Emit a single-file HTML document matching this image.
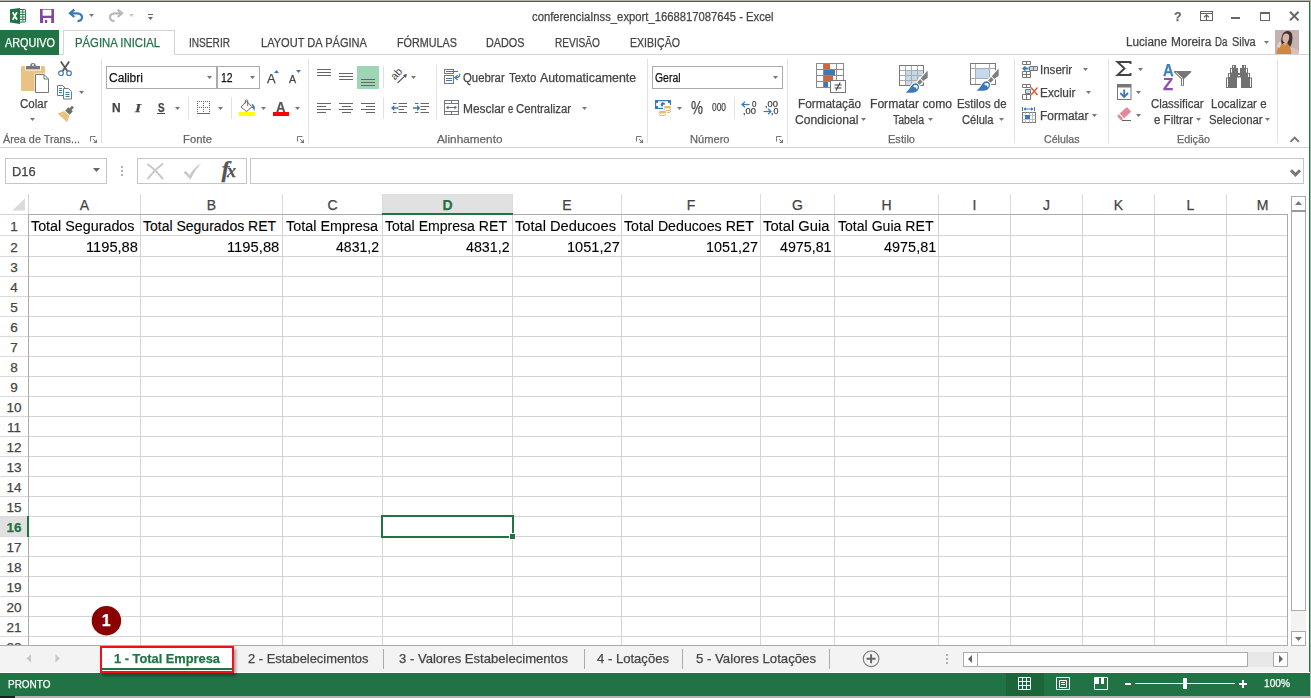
<!DOCTYPE html><html><head><meta charset="utf-8"><title>Excel</title><style>
html,body{margin:0;padding:0;}body{width:1311px;height:698px;position:relative;overflow:hidden;background:#fff;font-family:"Liberation Sans", sans-serif;}
.a{position:absolute;box-sizing:border-box;}svg.a{overflow:visible;}
.t{position:absolute;white-space:pre;line-height:1;transform-origin:0 0;-webkit-text-stroke:0.25px currentColor;}
</style></head><body>
<div class="a" style="left:0px;top:0px;width:1311px;height:1px;background:#217346;"></div>
<div class="a" style="left:1309px;top:0px;width:1px;height:697px;background:#217346;"></div>
<div class="a" style="left:1310px;top:0px;width:1px;height:698px;background:#9dc0ac;"></div>
<div class="a" style="left:0px;top:696px;width:1311px;height:2px;background:#b4b4b4;"></div>
<div class="a" style="left:0px;top:696px;width:15px;height:2px;background:#1a1f22;"></div>
<span class="t" id="t0" style="left:532.40px;top:11.00px;font-size:12.5px;color:#444444;transform:scaleX(0.9007);">conferenciaInss_export_1668817087645 - Excel</span>
<div class="a" style="left:0px;top:54px;width:1309px;height:1px;background:#d4d4d4;"></div>
<div class="a" style="left:0px;top:30px;width:59px;height:25px;background:#217346;"></div>
<span class="t" id="t1" style="left:4.50px;top:37.00px;font-size:12px;color:#fff;transform:scaleX(0.9034);">ARQUIVO</span>
<div class="a" style="left:63px;top:30px;width:112px;height:25px;background:#fff;border:1px solid #d4d4d4;border-bottom:none;"></div>
<span class="t" id="t2" style="left:75.48px;top:37.00px;font-size:12px;color:#217346;transform:scaleX(0.9443);">PÁGINA INICIAL</span>
<span class="t" id="t3" style="left:189.46px;top:37.00px;font-size:12px;color:#444444;transform:scaleX(0.8426);">INSERIR</span>
<span class="t" id="t4" style="left:260.50px;top:37.00px;font-size:12px;color:#444444;transform:scaleX(0.9222);">LAYOUT DA PÁGINA</span>
<span class="t" id="t5" style="left:396.50px;top:37.00px;font-size:12px;color:#444444;transform:scaleX(0.8997);">FÓRMULAS</span>
<span class="t" id="t6" style="left:486.49px;top:37.00px;font-size:12px;color:#444444;transform:scaleX(0.9021);">DADOS</span>
<span class="t" id="t7" style="left:554.50px;top:37.00px;font-size:12px;color:#444444;transform:scaleX(0.8433);">REVISÃO</span>
<span class="t" id="t8" style="left:629.50px;top:37.00px;font-size:12px;color:#444444;transform:scaleX(0.8820);">EXIBIÇÃO</span>
<span class="t" id="t9" style="left:1125.90px;top:36.00px;font-size:12px;color:#444444;transform:scaleX(0.9735);">Luciane</span>
<span class="t" id="t10" style="left:1171.10px;top:36.00px;font-size:12px;color:#444444;transform:scaleX(0.9905);">Moreira</span>
<span class="t" id="t11" style="left:1215.17px;top:36.00px;font-size:12px;color:#444444;transform:scaleX(0.8050);">Da</span>
<span class="t" id="t12" style="left:1231.70px;top:36.00px;font-size:12px;color:#444444;transform:scaleX(0.9110);">Silva</span>
<svg class="a" style="left:1263.5px;top:40.5px" width="5" height="3.0" viewBox="0 0 5 3.0"><path d="M0 0H5L2.5 3.0Z" fill="#777"/></svg>
<div class="a" style="left:0px;top:147px;width:1309px;height:1px;background:#d4d4d4;"></div>
<div class="a" style="left:101px;top:59px;width:1px;height:84px;background:#e1e1e1;"></div>
<div class="a" style="left:308px;top:59px;width:1px;height:84px;background:#e1e1e1;"></div>
<div class="a" style="left:647px;top:59px;width:1px;height:84px;background:#e1e1e1;"></div>
<div class="a" style="left:787px;top:59px;width:1px;height:84px;background:#e1e1e1;"></div>
<div class="a" style="left:1014px;top:59px;width:1px;height:84px;background:#e1e1e1;"></div>
<div class="a" style="left:1108px;top:59px;width:1px;height:84px;background:#e1e1e1;"></div>
<div class="a" style="left:1277px;top:59px;width:1px;height:84px;background:#e1e1e1;"></div>
<div class="a" style="left:436px;top:65px;width:1px;height:54px;background:#e1e1e1;"></div>
<span class="t" id="t13" style="left:3.00px;top:134.00px;font-size:11.5px;color:#666666;transform:scaleX(0.9410);">Área de Trans...</span>
<span class="t" id="t14" style="left:182.50px;top:134.00px;font-size:11.5px;color:#666666;transform:scaleX(0.9857);">Fonte</span>
<span class="t" id="t15" style="left:437.00px;top:134.00px;font-size:11.5px;color:#666666;transform:scaleX(1.0245);">Alinhamento</span>
<span class="t" id="t16" style="left:690.00px;top:134.00px;font-size:11.5px;color:#666666;transform:scaleX(0.9658);">Número</span>
<span class="t" id="t17" style="left:887.50px;top:134.00px;font-size:11.5px;color:#666666;transform:scaleX(0.9600);">Estilo</span>
<span class="t" id="t18" style="left:1044.00px;top:134.00px;font-size:11.5px;color:#666666;transform:scaleX(0.9256);">Células</span>
<span class="t" id="t19" style="left:1176.50px;top:134.00px;font-size:11.5px;color:#666666;transform:scaleX(0.9382);">Edição</span>
<span class="t" id="t20" style="left:19.51px;top:98.00px;font-size:12px;color:#444444;transform:scaleX(0.9589);">Colar</span>
<svg class="a" style="left:29.5px;top:118.0px" width="5" height="3.0" viewBox="0 0 5 3.0"><path d="M0 0H5L2.5 3.0Z" fill="#777"/></svg>
<svg class="a" style="left:78.5px;top:90.5px" width="5" height="3.0" viewBox="0 0 5 3.0"><path d="M0 0H5L2.5 3.0Z" fill="#777"/></svg>
<div class="a" style="left:106px;top:66px;width:111px;height:23px;background:#fff;border:1px solid #ababab;"></div>
<div class="a" style="left:217px;top:66px;width:43px;height:23px;background:#fff;border:1px solid #ababab;"></div>
<span class="t" id="t21" style="left:108.90px;top:72.00px;font-size:12.5px;color:#111;transform:scaleX(0.9568);">Calibri</span>
<span class="t" id="t22" style="left:221.10px;top:72.00px;font-size:12.5px;color:#111;transform:scaleX(0.8349);">12</span>
<svg class="a" style="left:207.0px;top:76.0px" width="5" height="3.0" viewBox="0 0 5 3.0"><path d="M0 0H5L2.5 3.0Z" fill="#777"/></svg>
<svg class="a" style="left:249.5px;top:76.0px" width="5" height="3.0" viewBox="0 0 5 3.0"><path d="M0 0H5L2.5 3.0Z" fill="#777"/></svg>
<span class="t" id="t23" style="left:266.86px;top:72.00px;font-size:13.5px;color:#444444;transform:scaleX(0.9510);">A</span>
<span class="t" id="t24" style="left:289.29px;top:74.00px;font-size:11px;color:#444444;transform:scaleX(0.9713);">A</span>
<span class="t" id="t25" style="left:112.38px;top:102.00px;font-size:12.5px;color:#444444;font-weight:bold;transform:scaleX(0.9539);">N</span>
<span class="t" id="t26" style="left:135.00px;top:101.00px;font-size:13.5px;color:#444444;font-weight:bold;font-style:italic;font-family:'Liberation Serif', serif;transform:scaleX(1.1632);">I</span>
<span class="t" id="t27" style="left:158.00px;top:102.00px;font-size:12.5px;color:#444444;font-weight:bold;transform:scaleX(0.7934);">S</span>
<div class="a" style="left:157px;top:113px;width:8px;height:1px;background:#444444;"></div>
<svg class="a" style="left:174.5px;top:107.0px" width="5" height="3.0" viewBox="0 0 5 3.0"><path d="M0 0H5L2.5 3.0Z" fill="#777"/></svg>
<svg class="a" style="left:217.5px;top:107.0px" width="5" height="3.0" viewBox="0 0 5 3.0"><path d="M0 0H5L2.5 3.0Z" fill="#777"/></svg>
<svg class="a" style="left:260.5px;top:107.0px" width="5" height="3.0" viewBox="0 0 5 3.0"><path d="M0 0H5L2.5 3.0Z" fill="#777"/></svg>
<svg class="a" style="left:294.5px;top:107.0px" width="5" height="3.0" viewBox="0 0 5 3.0"><path d="M0 0H5L2.5 3.0Z" fill="#777"/></svg>
<div class="a" style="left:188px;top:97px;width:1px;height:22px;background:#e1e1e1;"></div>
<div class="a" style="left:231px;top:97px;width:1px;height:22px;background:#e1e1e1;"></div>
<div class="a" style="left:239px;top:112px;width:16px;height:4px;background:#ffff00;"></div>
<span class="t" id="t28" style="left:276.47px;top:100.00px;font-size:14px;color:#555;font-weight:bold;transform:scaleX(0.9409);">A</span>
<div class="a" style="left:273px;top:112px;width:16px;height:4px;background:#ff0000;"></div>
<div class="a" style="left:357px;top:66px;width:22px;height:23px;background:#9fd5b7;"></div>
<div class="a" style="left:317px;top:69px;width:14px;height:1px;background:#666;"></div>
<div class="a" style="left:317px;top:72px;width:14px;height:1px;background:#666;"></div>
<div class="a" style="left:317px;top:75px;width:14px;height:1px;background:#666;"></div>
<div class="a" style="left:339px;top:73px;width:14px;height:1px;background:#666;"></div>
<div class="a" style="left:339px;top:76px;width:14px;height:1px;background:#666;"></div>
<div class="a" style="left:339px;top:79px;width:14px;height:1px;background:#666;"></div>
<div class="a" style="left:361px;top:79px;width:14px;height:1px;background:#666;"></div>
<div class="a" style="left:361px;top:82px;width:14px;height:1px;background:#666;"></div>
<div class="a" style="left:361px;top:85px;width:14px;height:1px;background:#666;"></div>
<div class="a" style="left:317px;top:103px;width:14px;height:1px;background:#666;"></div>
<div class="a" style="left:317px;top:106px;width:9px;height:1px;background:#666;"></div>
<div class="a" style="left:317px;top:109px;width:14px;height:1px;background:#666;"></div>
<div class="a" style="left:317px;top:112px;width:9px;height:1px;background:#666;"></div>
<div class="a" style="left:339.0px;top:103px;width:14px;height:1px;background:#666;"></div>
<div class="a" style="left:341.5px;top:106px;width:9px;height:1px;background:#666;"></div>
<div class="a" style="left:339.0px;top:109px;width:14px;height:1px;background:#666;"></div>
<div class="a" style="left:341.5px;top:112px;width:9px;height:1px;background:#666;"></div>
<div class="a" style="left:361px;top:103px;width:14px;height:1px;background:#666;"></div>
<div class="a" style="left:366px;top:106px;width:9px;height:1px;background:#666;"></div>
<div class="a" style="left:361px;top:109px;width:14px;height:1px;background:#666;"></div>
<div class="a" style="left:366px;top:112px;width:9px;height:1px;background:#666;"></div>
<div class="a" style="left:383px;top:66px;width:1px;height:22px;background:#e1e1e1;"></div>
<div class="a" style="left:383px;top:97px;width:1px;height:22px;background:#e1e1e1;"></div>
<svg class="a" style="left:410.5px;top:76.0px" width="5" height="3.0" viewBox="0 0 5 3.0"><path d="M0 0H5L2.5 3.0Z" fill="#777"/></svg>
<span class="t" id="t29" style="left:462.90px;top:72.00px;font-size:12px;color:#444444;transform:scaleX(0.9471);">Quebrar</span>
<span class="t" id="t30" style="left:508.70px;top:72.00px;font-size:12px;color:#444444;transform:scaleX(0.9517);">Texto</span>
<span class="t" id="t31" style="left:540.20px;top:72.00px;font-size:12px;color:#444444;transform:scaleX(1.0291);">Automaticamente</span>
<span class="t" id="t32" style="left:462.79px;top:103.00px;font-size:12px;color:#444444;transform:scaleX(0.9950);">Mesclar</span>
<span class="t" id="t33" style="left:507.57px;top:103.00px;font-size:12px;color:#444444;transform:scaleX(0.7849);">e</span>
<span class="t" id="t34" style="left:516.20px;top:103.00px;font-size:12px;color:#444444;transform:scaleX(0.9496);">Centralizar</span>
<svg class="a" style="left:582.0px;top:106.5px" width="5" height="3.0" viewBox="0 0 5 3.0"><path d="M0 0H5L2.5 3.0Z" fill="#777"/></svg>
<div class="a" style="left:652px;top:66px;width:131px;height:23px;background:#fff;border:1px solid #ababab;"></div>
<span class="t" id="t35" style="left:655.40px;top:72.00px;font-size:12.5px;color:#111;transform:scaleX(0.8343);">Geral</span>
<svg class="a" style="left:773.0px;top:76.0px" width="5" height="3.0" viewBox="0 0 5 3.0"><path d="M0 0H5L2.5 3.0Z" fill="#777"/></svg>
<svg class="a" style="left:677.0px;top:107.0px" width="5" height="3.0" viewBox="0 0 5 3.0"><path d="M0 0H5L2.5 3.0Z" fill="#777"/></svg>
<span class="t" id="t36" style="left:691.22px;top:100.00px;font-size:17.5px;color:#444444;transform:scaleX(0.7665);">%</span>
<span class="t" id="t37" style="left:712.08px;top:102.00px;font-size:11px;color:#444444;transform:scaleX(0.7585);">000</span>
<div class="a" style="left:734px;top:97px;width:1px;height:22px;background:#e1e1e1;"></div>
<span class="t" id="t38" style="left:798.48px;top:98.00px;font-size:12px;color:#444444;transform:scaleX(0.9842);">Formatação</span>
<span class="t" id="t39" style="left:794.50px;top:114.00px;font-size:12px;color:#444444;transform:scaleX(1.0125);">Condicional</span>
<svg class="a" style="left:861.0px;top:118.0px" width="5" height="3.0" viewBox="0 0 5 3.0"><path d="M0 0H5L2.5 3.0Z" fill="#777"/></svg>
<span class="t" id="t40" style="left:870.48px;top:98.00px;font-size:12px;color:#444444;transform:scaleX(1.0080);">Formatar como</span>
<span class="t" id="t41" style="left:893.00px;top:114.00px;font-size:12px;color:#444444;transform:scaleX(0.8772);">Tabela</span>
<svg class="a" style="left:928.0px;top:118.0px" width="5" height="3.0" viewBox="0 0 5 3.0"><path d="M0 0H5L2.5 3.0Z" fill="#777"/></svg>
<span class="t" id="t42" style="left:957.46px;top:98.00px;font-size:12px;color:#444444;transform:scaleX(0.9521);">Estilos de</span>
<span class="t" id="t43" style="left:962.00px;top:114.00px;font-size:12px;color:#444444;transform:scaleX(0.9263);">Célula</span>
<svg class="a" style="left:998.5px;top:118.0px" width="5" height="3.0" viewBox="0 0 5 3.0"><path d="M0 0H5L2.5 3.0Z" fill="#777"/></svg>
<span class="t" id="t44" style="left:1040.45px;top:64.00px;font-size:12px;color:#444444;transform:scaleX(0.9607);">Inserir</span>
<span class="t" id="t45" style="left:1040.46px;top:87.00px;font-size:12px;color:#444444;transform:scaleX(0.9863);">Excluir</span>
<span class="t" id="t46" style="left:1040.47px;top:110.00px;font-size:12px;color:#444444;transform:scaleX(0.9965);">Formatar</span>
<svg class="a" style="left:1083.0px;top:68.0px" width="5" height="3.0" viewBox="0 0 5 3.0"><path d="M0 0H5L2.5 3.0Z" fill="#777"/></svg>
<svg class="a" style="left:1086.0px;top:91.0px" width="5" height="3.0" viewBox="0 0 5 3.0"><path d="M0 0H5L2.5 3.0Z" fill="#777"/></svg>
<svg class="a" style="left:1092.0px;top:114.0px" width="5" height="3.0" viewBox="0 0 5 3.0"><path d="M0 0H5L2.5 3.0Z" fill="#777"/></svg>
<svg class="a" style="left:1138.0px;top:68.0px" width="5" height="3.0" viewBox="0 0 5 3.0"><path d="M0 0H5L2.5 3.0Z" fill="#777"/></svg>
<svg class="a" style="left:1136.0px;top:91.0px" width="5" height="3.0" viewBox="0 0 5 3.0"><path d="M0 0H5L2.5 3.0Z" fill="#777"/></svg>
<svg class="a" style="left:1136.0px;top:114.0px" width="5" height="3.0" viewBox="0 0 5 3.0"><path d="M0 0H5L2.5 3.0Z" fill="#777"/></svg>
<span class="t" id="t47" style="left:1150.50px;top:98.00px;font-size:12px;color:#444444;transform:scaleX(0.9487);">Classificar</span>
<span class="t" id="t48" style="left:1153.50px;top:114.00px;font-size:12px;color:#444444;transform:scaleX(0.9589);">e Filtrar</span>
<svg class="a" style="left:1195.5px;top:118.0px" width="5" height="3.0" viewBox="0 0 5 3.0"><path d="M0 0H5L2.5 3.0Z" fill="#777"/></svg>
<span class="t" id="t49" style="left:1211.48px;top:98.00px;font-size:12px;color:#444444;transform:scaleX(0.9566);">Localizar e</span>
<span class="t" id="t50" style="left:1208.50px;top:114.00px;font-size:12px;color:#444444;transform:scaleX(0.9436);">Selecionar</span>
<svg class="a" style="left:1265.0px;top:118.0px" width="5" height="3.0" viewBox="0 0 5 3.0"><path d="M0 0H5L2.5 3.0Z" fill="#777"/></svg>
<div class="a" style="left:5px;top:158px;width:102px;height:26px;background:#fff;border:1px solid #c6c6c6;"></div>
<span class="t" id="t51" style="left:11.71px;top:165.00px;font-size:13px;color:#444444;transform:scaleX(0.9926);">D16</span>
<svg class="a" style="left:93.0px;top:168.0px" width="7" height="4.0" viewBox="0 0 7 4.0"><path d="M0 0H7L3.5 4.0Z" fill="#666"/></svg>
<div class="a" style="left:121px;top:166px;width:2px;height:2px;background:#b0b0b0;"></div>
<div class="a" style="left:121px;top:170px;width:2px;height:2px;background:#b0b0b0;"></div>
<div class="a" style="left:121px;top:174px;width:2px;height:2px;background:#b0b0b0;"></div>
<div class="a" style="left:137px;top:158px;width:110px;height:26px;background:#fff;border:1px solid #c6c6c6;"></div>
<div class="a" style="left:250px;top:158px;width:1054px;height:26px;background:#fff;border:1px solid #c6c6c6;"></div>
<svg class="a" style="left:146px;top:162px" width="20" height="18" viewBox="0 0 20 18"><path d="M2 2.5C7 6 12 11 16.5 16.5M16.5 2C11 6 6 11 2 16.5" fill="none" stroke="#c8c8c8" stroke-width="2" stroke-linecap="round"/></svg>
<svg class="a" style="left:182px;top:162px" width="21" height="19" viewBox="0 0 21 19"><path d="M1.5 10.5L4 9L7.5 13C10.5 8 14 4.5 19 1.5C15 6 11.5 11 8.5 17.5Z" fill="#c8c8c8"/></svg>
<span class="t" id="t52" style="left:221.50px;top:157.00px;font-size:24px;color:#555;font-weight:bold;font-style:italic;font-family:'Liberation Serif', serif;">f</span>
<span class="t" id="t53" style="left:227.44px;top:161.00px;font-size:19px;color:#555;font-weight:bold;font-style:italic;font-family:'Liberation Serif', serif;transform:scaleX(0.9592);">x</span>
<div class="a" style="left:383px;top:194px;width:130px;height:20px;background:#e1e1e1;"></div>
<div class="a" style="left:0px;top:517px;width:28px;height:20px;background:#e1e1e1;"></div>
<div class="a" style="left:140px;top:194px;width:1px;height:20px;background:#dadada;"></div>
<div class="a" style="left:140px;top:215px;width:1px;height:431px;background:#d4d4d4;"></div>
<div class="a" style="left:282px;top:194px;width:1px;height:20px;background:#dadada;"></div>
<div class="a" style="left:282px;top:215px;width:1px;height:431px;background:#d4d4d4;"></div>
<div class="a" style="left:382px;top:194px;width:1px;height:20px;background:#dadada;"></div>
<div class="a" style="left:382px;top:215px;width:1px;height:431px;background:#d4d4d4;"></div>
<div class="a" style="left:512px;top:194px;width:1px;height:20px;background:#dadada;"></div>
<div class="a" style="left:512px;top:215px;width:1px;height:431px;background:#d4d4d4;"></div>
<div class="a" style="left:621px;top:194px;width:1px;height:20px;background:#dadada;"></div>
<div class="a" style="left:621px;top:215px;width:1px;height:431px;background:#d4d4d4;"></div>
<div class="a" style="left:760px;top:194px;width:1px;height:20px;background:#dadada;"></div>
<div class="a" style="left:760px;top:215px;width:1px;height:431px;background:#d4d4d4;"></div>
<div class="a" style="left:834px;top:194px;width:1px;height:20px;background:#dadada;"></div>
<div class="a" style="left:834px;top:215px;width:1px;height:431px;background:#d4d4d4;"></div>
<div class="a" style="left:938px;top:194px;width:1px;height:20px;background:#dadada;"></div>
<div class="a" style="left:938px;top:215px;width:1px;height:431px;background:#d4d4d4;"></div>
<div class="a" style="left:1010px;top:194px;width:1px;height:20px;background:#dadada;"></div>
<div class="a" style="left:1010px;top:215px;width:1px;height:431px;background:#d4d4d4;"></div>
<div class="a" style="left:1082px;top:194px;width:1px;height:20px;background:#dadada;"></div>
<div class="a" style="left:1082px;top:215px;width:1px;height:431px;background:#d4d4d4;"></div>
<div class="a" style="left:1154px;top:194px;width:1px;height:20px;background:#dadada;"></div>
<div class="a" style="left:1154px;top:215px;width:1px;height:431px;background:#d4d4d4;"></div>
<div class="a" style="left:1226px;top:194px;width:1px;height:20px;background:#dadada;"></div>
<div class="a" style="left:1226px;top:215px;width:1px;height:431px;background:#d4d4d4;"></div>
<div class="a" style="left:0px;top:235px;width:28px;height:1px;background:#dadada;"></div>
<div class="a" style="left:29px;top:235px;width:1258px;height:1px;background:#d4d4d4;"></div>
<div class="a" style="left:0px;top:256px;width:28px;height:1px;background:#dadada;"></div>
<div class="a" style="left:29px;top:256px;width:1258px;height:1px;background:#d4d4d4;"></div>
<div class="a" style="left:0px;top:276px;width:28px;height:1px;background:#dadada;"></div>
<div class="a" style="left:29px;top:276px;width:1258px;height:1px;background:#d4d4d4;"></div>
<div class="a" style="left:0px;top:296px;width:28px;height:1px;background:#dadada;"></div>
<div class="a" style="left:29px;top:296px;width:1258px;height:1px;background:#d4d4d4;"></div>
<div class="a" style="left:0px;top:316px;width:28px;height:1px;background:#dadada;"></div>
<div class="a" style="left:29px;top:316px;width:1258px;height:1px;background:#d4d4d4;"></div>
<div class="a" style="left:0px;top:336px;width:28px;height:1px;background:#dadada;"></div>
<div class="a" style="left:29px;top:336px;width:1258px;height:1px;background:#d4d4d4;"></div>
<div class="a" style="left:0px;top:356px;width:28px;height:1px;background:#dadada;"></div>
<div class="a" style="left:29px;top:356px;width:1258px;height:1px;background:#d4d4d4;"></div>
<div class="a" style="left:0px;top:376px;width:28px;height:1px;background:#dadada;"></div>
<div class="a" style="left:29px;top:376px;width:1258px;height:1px;background:#d4d4d4;"></div>
<div class="a" style="left:0px;top:396px;width:28px;height:1px;background:#dadada;"></div>
<div class="a" style="left:29px;top:396px;width:1258px;height:1px;background:#d4d4d4;"></div>
<div class="a" style="left:0px;top:416px;width:28px;height:1px;background:#dadada;"></div>
<div class="a" style="left:29px;top:416px;width:1258px;height:1px;background:#d4d4d4;"></div>
<div class="a" style="left:0px;top:436px;width:28px;height:1px;background:#dadada;"></div>
<div class="a" style="left:29px;top:436px;width:1258px;height:1px;background:#d4d4d4;"></div>
<div class="a" style="left:0px;top:456px;width:28px;height:1px;background:#dadada;"></div>
<div class="a" style="left:29px;top:456px;width:1258px;height:1px;background:#d4d4d4;"></div>
<div class="a" style="left:0px;top:476px;width:28px;height:1px;background:#dadada;"></div>
<div class="a" style="left:29px;top:476px;width:1258px;height:1px;background:#d4d4d4;"></div>
<div class="a" style="left:0px;top:496px;width:28px;height:1px;background:#dadada;"></div>
<div class="a" style="left:29px;top:496px;width:1258px;height:1px;background:#d4d4d4;"></div>
<div class="a" style="left:0px;top:516px;width:28px;height:1px;background:#dadada;"></div>
<div class="a" style="left:29px;top:516px;width:1258px;height:1px;background:#d4d4d4;"></div>
<div class="a" style="left:0px;top:536px;width:28px;height:1px;background:#dadada;"></div>
<div class="a" style="left:29px;top:536px;width:1258px;height:1px;background:#d4d4d4;"></div>
<div class="a" style="left:0px;top:556px;width:28px;height:1px;background:#dadada;"></div>
<div class="a" style="left:29px;top:556px;width:1258px;height:1px;background:#d4d4d4;"></div>
<div class="a" style="left:0px;top:576px;width:28px;height:1px;background:#dadada;"></div>
<div class="a" style="left:29px;top:576px;width:1258px;height:1px;background:#d4d4d4;"></div>
<div class="a" style="left:0px;top:596px;width:28px;height:1px;background:#dadada;"></div>
<div class="a" style="left:29px;top:596px;width:1258px;height:1px;background:#d4d4d4;"></div>
<div class="a" style="left:0px;top:616px;width:28px;height:1px;background:#dadada;"></div>
<div class="a" style="left:29px;top:616px;width:1258px;height:1px;background:#d4d4d4;"></div>
<div class="a" style="left:0px;top:636px;width:28px;height:1px;background:#dadada;"></div>
<div class="a" style="left:29px;top:636px;width:1258px;height:1px;background:#d4d4d4;"></div>
<div class="a" style="left:0px;top:214px;width:28px;height:1px;background:#d4d4d4;"></div>
<div class="a" style="left:28px;top:214px;width:1260px;height:1px;background:#ababab;"></div>
<div class="a" style="left:28px;top:194px;width:1px;height:20px;background:#d4d4d4;"></div>
<div class="a" style="left:28px;top:214px;width:1px;height:432px;background:#ababab;"></div>
<div class="a" style="left:1287px;top:214px;width:1px;height:432px;background:#ababab;"></div>
<div class="a" style="left:382px;top:213px;width:131px;height:2px;background:#217346;"></div>
<div class="a" style="left:27px;top:516px;width:2px;height:21px;background:#217346;"></div>
<svg class="a" style="left:12px;top:198px" width="13" height="13" viewBox="0 0 13 13"><path d="M13 0.4V12.6H0.2Z" fill="#dadada"/></svg>
<span class="t" id="t54" style="left:79.83px;top:198.00px;font-size:14px;color:#444444;">A</span>
<span class="t" id="t55" style="left:206.83px;top:198.00px;font-size:14px;color:#444444;">B</span>
<span class="t" id="t56" style="left:327.44px;top:198.00px;font-size:14px;color:#444444;">C</span>
<span class="t" id="t57" style="left:442.44px;top:198.00px;font-size:14px;color:#217346;font-weight:bold;">D</span>
<span class="t" id="t58" style="left:562.33px;top:198.00px;font-size:14px;color:#444444;">E</span>
<span class="t" id="t59" style="left:686.72px;top:198.00px;font-size:14px;color:#444444;">F</span>
<span class="t" id="t60" style="left:792.05px;top:198.00px;font-size:14px;color:#444444;">G</span>
<span class="t" id="t61" style="left:881.44px;top:198.00px;font-size:14px;color:#444444;">H</span>
<span class="t" id="t62" style="left:972.55px;top:198.00px;font-size:14px;color:#444444;">I</span>
<span class="t" id="t63" style="left:1043.00px;top:198.00px;font-size:14px;color:#444444;">J</span>
<span class="t" id="t64" style="left:1113.83px;top:198.00px;font-size:14px;color:#444444;">K</span>
<span class="t" id="t65" style="left:1186.60px;top:198.00px;font-size:14px;color:#444444;">L</span>
<span class="t" id="t66" style="left:1256.66px;top:198.00px;font-size:14px;color:#444444;">M</span>
<span class="t" id="t67" style="left:10.24px;top:220.00px;font-size:13.5px;color:#444444;">1</span>
<span class="t" id="t68" style="left:10.24px;top:241.00px;font-size:13.5px;color:#444444;">2</span>
<span class="t" id="t69" style="left:10.24px;top:261.00px;font-size:13.5px;color:#444444;">3</span>
<span class="t" id="t70" style="left:10.24px;top:281.00px;font-size:13.5px;color:#444444;">4</span>
<span class="t" id="t71" style="left:10.24px;top:301.00px;font-size:13.5px;color:#444444;">5</span>
<span class="t" id="t72" style="left:10.24px;top:321.00px;font-size:13.5px;color:#444444;">6</span>
<span class="t" id="t73" style="left:10.24px;top:341.00px;font-size:13.5px;color:#444444;">7</span>
<span class="t" id="t74" style="left:10.24px;top:361.00px;font-size:13.5px;color:#444444;">8</span>
<span class="t" id="t75" style="left:10.24px;top:381.00px;font-size:13.5px;color:#444444;">9</span>
<span class="t" id="t76" style="left:6.48px;top:401.00px;font-size:13.5px;color:#444444;">10</span>
<span class="t" id="t77" style="left:6.99px;top:421.00px;font-size:13.5px;color:#444444;">11</span>
<span class="t" id="t78" style="left:6.48px;top:441.00px;font-size:13.5px;color:#444444;">12</span>
<span class="t" id="t79" style="left:6.48px;top:461.00px;font-size:13.5px;color:#444444;">13</span>
<span class="t" id="t80" style="left:6.48px;top:481.00px;font-size:13.5px;color:#444444;">14</span>
<span class="t" id="t81" style="left:6.48px;top:501.00px;font-size:13.5px;color:#444444;">15</span>
<span class="t" id="t82" style="left:6.48px;top:521.00px;font-size:13.5px;color:#217346;font-weight:bold;">16</span>
<span class="t" id="t83" style="left:6.48px;top:541.00px;font-size:13.5px;color:#444444;">17</span>
<span class="t" id="t84" style="left:6.48px;top:561.00px;font-size:13.5px;color:#444444;">18</span>
<span class="t" id="t85" style="left:6.48px;top:581.00px;font-size:13.5px;color:#444444;">19</span>
<span class="t" id="t86" style="left:6.48px;top:601.00px;font-size:13.5px;color:#444444;">20</span>
<span class="t" id="t87" style="left:6.48px;top:621.00px;font-size:13.5px;color:#444444;">21</span>
<div class="a" style="left:0;top:637px;width:28px;height:8px;overflow:hidden">
<span class="t" id="t88" style="left:6.48px;top:4.00px;font-size:13.5px;color:#444444;">22</span>
</div>
<span class="t" id="t89" style="left:31.00px;top:219.00px;font-size:14px;color:#000;-webkit-text-stroke-width:0.1px;transform:scaleX(1.0229);">Total Segurados</span>
<span class="t" id="t90" style="left:143.00px;top:219.00px;font-size:14px;color:#000;-webkit-text-stroke-width:0.1px;">Total Segurados RET</span>
<span class="t" id="t91" style="left:285.50px;top:219.00px;font-size:14px;color:#000;-webkit-text-stroke-width:0.1px;transform:scaleX(1.0281);">Total Empresa</span>
<span class="t" id="t92" style="left:385.00px;top:219.00px;font-size:14px;color:#000;-webkit-text-stroke-width:0.1px;transform:scaleX(1.0051);">Total Empresa RET</span>
<span class="t" id="t93" style="left:515.00px;top:219.00px;font-size:14px;color:#000;-webkit-text-stroke-width:0.1px;transform:scaleX(1.0465);">Total Deducoes</span>
<span class="t" id="t94" style="left:624.00px;top:219.00px;font-size:14px;color:#000;-webkit-text-stroke-width:0.1px;transform:scaleX(1.0124);">Total Deducoes RET</span>
<span class="t" id="t95" style="left:763.00px;top:219.00px;font-size:14px;color:#000;-webkit-text-stroke-width:0.1px;transform:scaleX(1.0548);">Total Guia</span>
<span class="t" id="t96" style="left:837.50px;top:219.00px;font-size:14px;color:#000;-webkit-text-stroke-width:0.1px;transform:scaleX(1.0060);">Total Guia RET</span>
<span class="t" id="t97" style="left:85.87px;top:240.00px;font-size:14px;color:#000;-webkit-text-stroke-width:0.1px;transform:scaleX(1.0477);">1195,88</span>
<span class="t" id="t98" style="left:227.46px;top:240.00px;font-size:14px;color:#000;-webkit-text-stroke-width:0.1px;transform:scaleX(1.0554);">1195,88</span>
<span class="t" id="t99" style="left:335.90px;top:240.00px;font-size:14px;color:#000;-webkit-text-stroke-width:0.1px;transform:scaleX(1.0040);">4831,2</span>
<span class="t" id="t100" style="left:466.00px;top:240.00px;font-size:14px;color:#000;-webkit-text-stroke-width:0.1px;transform:scaleX(1.0181);">4831,2</span>
<span class="t" id="t101" style="left:566.76px;top:240.00px;font-size:14px;color:#000;-webkit-text-stroke-width:0.1px;transform:scaleX(1.0423);">1051,27</span>
<span class="t" id="t102" style="left:705.98px;top:240.00px;font-size:14px;color:#000;-webkit-text-stroke-width:0.1px;transform:scaleX(1.0279);">1051,27</span>
<span class="t" id="t103" style="left:780.00px;top:240.00px;font-size:14px;color:#000;-webkit-text-stroke-width:0.1px;transform:scaleX(1.0177);">4975,81</span>
<span class="t" id="t104" style="left:883.90px;top:240.00px;font-size:14px;color:#000;-webkit-text-stroke-width:0.1px;transform:scaleX(1.0316);">4975,81</span>
<div class="a" style="left:381px;top:515px;width:133px;height:23px;border:2px solid #217346;"></div>
<div class="a" style="left:509px;top:533px;width:7px;height:7px;background:#217346;border:1px solid #fff;"></div>
<div class="a" style="left:1288px;top:186px;width:21px;height:460px;background:#fff;"></div>
<div class="a" style="left:1291px;top:211px;width:15px;height:421px;background:#f3f3f3;"></div>
<div class="a" style="left:1291px;top:196px;width:15px;height:15px;background:#fff;border:1px solid #ababab;"></div>
<div class="a" style="left:1291px;top:210px;width:15px;height:401px;background:#fff;border:1px solid #ababab;"></div>
<div class="a" style="left:1291px;top:210px;width:15px;height:2px;background:#9a9a9a;"></div>
<div class="a" style="left:1291px;top:631px;width:15px;height:15px;background:#fff;border:1px solid #ababab;"></div>
<svg class="a" style="left:1295px;top:201px" width="7" height="4" viewBox="0 0 7 4"><path d="M0 4H7L3.5 0Z" fill="#777"/></svg>
<svg class="a" style="left:1295px;top:637px" width="7" height="4" viewBox="0 0 7 4"><path d="M0 0H7L3.5 4Z" fill="#777"/></svg>
<div class="a" style="left:0px;top:646px;width:1309px;height:27px;background:#f3f3f3;"></div>
<div class="a" style="left:0px;top:645px;width:1288px;height:1px;background:#ababab;"></div>
<div class="a" style="left:102px;top:646px;width:130px;height:25px;background:#fff;"></div>
<span class="t" id="t105" style="left:113.50px;top:652.00px;font-size:13.5px;color:#217346;font-weight:bold;transform:scaleX(0.9503);">1 - Total Empresa</span>
<div class="a" style="left:102px;top:668px;width:130px;height:2px;background:#217346;"></div>
<span class="t" id="t106" style="left:247.50px;top:652.00px;font-size:13.5px;color:#444444;transform:scaleX(0.9559);">2 - Estabelecimentos</span>
<span class="t" id="t107" style="left:399.00px;top:652.00px;font-size:13.5px;color:#444444;transform:scaleX(0.9680);">3 - Valores Estabelecimentos</span>
<span class="t" id="t108" style="left:597.00px;top:652.00px;font-size:13.5px;color:#444444;transform:scaleX(0.9691);">4 - Lotações</span>
<span class="t" id="t109" style="left:696.00px;top:652.00px;font-size:13.5px;color:#444444;transform:scaleX(0.9770);">5 - Valores Lotações</span>
<div class="a" style="left:383px;top:649px;width:1px;height:20px;background:#ababab;"></div>
<div class="a" style="left:584px;top:649px;width:1px;height:20px;background:#ababab;"></div>
<div class="a" style="left:682px;top:649px;width:1px;height:20px;background:#ababab;"></div>
<div class="a" style="left:829px;top:649px;width:1px;height:20px;background:#ababab;"></div>
<svg class="a" style="left:26px;top:654px" width="6" height="9" viewBox="0 0 6 9"><path d="M5 0.5V8.5L0.5 4.5Z" fill="#c6c6c6"/></svg>
<svg class="a" style="left:55px;top:654px" width="6" height="9" viewBox="0 0 6 9"><path d="M0.5 0.5V8.5L5 4.5Z" fill="#c6c6c6"/></svg>
<svg class="a" style="left:862px;top:650px" width="18" height="18" viewBox="0 0 18 18"><circle cx="9.1" cy="8.8" r="7.8" fill="none" stroke="#777" stroke-width="1.1"/><path d="M4.6 8.8H13.6M9.1 4.3V13.3" stroke="#666" stroke-width="1.9"/></svg>
<div class="a" style="left:946px;top:654px;width:2px;height:2px;background:#b0b0b0;"></div>
<div class="a" style="left:946px;top:658px;width:2px;height:2px;background:#b0b0b0;"></div>
<div class="a" style="left:946px;top:662px;width:2px;height:2px;background:#b0b0b0;"></div>
<div class="a" style="left:963px;top:652px;width:325px;height:15px;background:#e8e8e8;"></div>
<div class="a" style="left:963px;top:652px;width:15px;height:15px;background:#fff;border:1px solid #ababab;"></div>
<div class="a" style="left:977px;top:652px;width:271px;height:15px;background:#fff;border:1px solid #ababab;"></div>
<div class="a" style="left:1273px;top:652px;width:15px;height:15px;background:#fff;border:1px solid #ababab;"></div>
<svg class="a" style="left:968px;top:655px" width="4" height="8" viewBox="0 0 4 8"><path d="M4 0V8L0 4Z" fill="#666"/></svg>
<svg class="a" style="left:1279px;top:655px" width="4" height="8" viewBox="0 0 4 8"><path d="M0 0V8L4 4Z" fill="#666"/></svg>
<svg class="a" style="left:91px;top:605px" width="31" height="31" viewBox="0 0 31 31"><circle cx="15.4" cy="15.7" r="14.7" fill="#8b0000"/></svg>
<span class="t" id="t110" style="left:101.80px;top:613.00px;font-size:16px;color:#fff;font-weight:bold;">1</span>
<div class="a" style="left:0px;top:672px;width:1310px;height:1px;background:#fff;"></div>
<div class="a" style="left:0px;top:673px;width:1310px;height:23px;background:#217346;"></div>
<span class="t" id="t111" style="left:8.10px;top:679.00px;font-size:11px;color:#fff;transform:scaleX(0.9049);">PRONTO</span>
<div class="a" style="left:1006px;top:673px;width:38px;height:23px;background:#1a6639;"></div>
<span class="t" id="t112" style="left:1264.09px;top:678.00px;font-size:11px;color:#fff;transform:scaleX(0.9209);">100%</span>
<div class="a" style="left:1135px;top:683px;width:100px;height:1px;background:#fff;"></div>
<div class="a" style="left:1183px;top:678px;width:4px;height:11px;background:#fff;"></div>
<div class="a" style="left:1125px;top:683px;width:6px;height:2px;background:#fff;"></div>
<div class="a" style="left:1239px;top:683px;width:8px;height:2px;background:#fff;"></div>
<div class="a" style="left:1242px;top:680px;width:2px;height:8px;background:#fff;"></div>
<svg class="a" style="left:1018px;top:677px" width="13" height="13" viewBox="0 0 13 13"><path d="M0.5 0.5H12.5V12.5H0.5ZM4.5 0.5V12.5M8.5 0.5V12.5M0.5 4.5H12.5M0.5 8.5H12.5" fill="none" stroke="#fff" stroke-width="1"/></svg>
<svg class="a" style="left:1056px;top:677px" width="14" height="13" viewBox="0 0 14 13"><path d="M0.5 0.5H13.5V12.5H0.5Z" fill="none" stroke="#fff" stroke-width="1"/><path d="M3.5 3.5H10.5V10.5H3.5Z" fill="none" stroke="#fff" stroke-width="1"/><path d="M5 5.5H9M5 7.5H9" stroke="#fff" stroke-width="1"/></svg>
<svg class="a" style="left:1094px;top:677px" width="14" height="13" viewBox="0 0 14 13"><path d="M0.5 0.5H13.5V12.5H0.5Z" fill="none" stroke="#fff" stroke-width="1"/><path d="M1 1H5V7H1ZM7 1H10V7H7Z" fill="#fff"/></svg>
<div class="a" style="left:0px;top:0px;width:1311px;height:1px;background:#b4b4b4;"></div>
<div class="a" style="left:0px;top:1px;width:1309px;height:1px;background:#217346;"></div>
<svg class="a" style="left:10px;top:8px" width="17" height="16" viewBox="0 0 17 16"><rect x="9" y="1.5" width="6.6" height="12.5" rx="0.8" fill="#fff" stroke="#217346" stroke-width="1"/>
<path d="M10 4H15M10 6.5H15M10 9H15M10 11.5H15M12.8 2V13.5" stroke="#217346" stroke-width="0.9"/>
<path d="M0 1.3L10 0V16L0 14.6Z" fill="#217346"/>
<path d="M2.7 4.3L7 11.7M7 4.3L2.7 11.7" stroke="#fff" stroke-width="1.7"/></svg>
<svg class="a" style="left:40px;top:9px" width="14" height="14" viewBox="0 0 14 14"><rect x="0" y="0" width="14" height="14" fill="#8246a3"/>
<rect x="2.6" y="0.7" width="8.8" height="6" fill="#fff"/>
<rect x="3.1" y="9" width="8.1" height="5" fill="#fff"/>
<rect x="5" y="11" width="2.2" height="3" fill="#8246a3"/></svg>
<svg class="a" style="left:68px;top:8px" width="16" height="14" viewBox="0 0 16 14"><path d="M3 5.3H9C12.5 5.3 14 7.5 14 9.3C14 11.5 12.3 13 9.5 13.2" fill="none" stroke="#3b78b8" stroke-width="2.2"/>
<path d="M6.3 1.6L2 5.3L6.3 9" fill="none" stroke="#3b78b8" stroke-width="2.3"/></svg>
<svg class="a" style="left:89.0px;top:14.0px" width="5" height="3.0" viewBox="0 0 5 3.0"><path d="M0 0H5L2.5 3.0Z" fill="#777"/></svg>
<svg class="a" style="left:108px;top:8px" width="16" height="14" viewBox="0 0 16 14"><path d="M13 5.3H7C3.5 5.3 2 7.5 2 9.3C2 11.5 3.7 13 6.5 13.2" fill="none" stroke="#b9b9b9" stroke-width="2.2"/>
<path d="M9.7 1.6L14 5.3L9.7 9" fill="none" stroke="#b9b9b9" stroke-width="2.3"/></svg>
<svg class="a" style="left:129.0px;top:14.0px" width="5" height="3.0" viewBox="0 0 5 3.0"><path d="M0 0H5L2.5 3.0Z" fill="#c8c8c8"/></svg>
<div class="a" style="left:148px;top:14px;width:5px;height:1px;background:#666;"></div>
<svg class="a" style="left:148.0px;top:17.0px" width="5" height="3.0" viewBox="0 0 5 3.0"><path d="M0 0H5L2.5 3.0Z" fill="#666"/></svg>
<span class="t" id="t113" style="left:1174.00px;top:10.00px;font-size:13.5px;color:#666;font-weight:bold;transform:scaleX(0.9131);">?</span>
<svg class="a" style="left:1200px;top:11px" width="13" height="10" viewBox="0 0 13 10"><rect x="0.5" y="0.5" width="12" height="9" fill="none" stroke="#666" stroke-width="1"/>
<path d="M0.5 2.5H12.5" stroke="#666" stroke-width="1"/><path d="M6.5 4V9M4 6.2L6.5 3.8L9 6.2" fill="none" stroke="#666" stroke-width="1.2"/></svg>
<div class="a" style="left:1231px;top:17px;width:9px;height:2px;background:#666;"></div>
<div class="a" style="left:1260px;top:11.5px;width:10px;height:9.5px;border:1px solid #666;border-top-width:2.5px;"></div>
<svg class="a" style="left:1289px;top:11px" width="11" height="10" viewBox="0 0 11 10"><path d="M1 0.8L9.6 9.4M9.6 0.8L1 9.4" stroke="#666" stroke-width="2"/></svg>
<div class="a" style="left:1275px;top:30px;width:24px;height:24px;overflow:hidden;background:#c2b0b0"><svg width="24" height="24" viewBox="0 0 24 24" style="position:absolute;left:0;top:0;filter:blur(0.7px)">
<rect x="-2" y="-2" width="28" height="28" fill="#c4b2b1"/>
<path d="M7 6C8 1 15 -1 17 4C18 9 17 14 15 17L12 17L13 9L8 14L6.5 15C6 12 6 9 7 6Z" fill="#3f2f2e"/>
<ellipse cx="10.8" cy="8" rx="3.3" ry="4.5" transform="rotate(12 10.8 8)" fill="#d9b3a6"/>
<path d="M1.5 24C2 19 4 15 8 13.5L12 13.5C15 15 16.5 19 16.5 24Z" fill="#d0873f"/>
<path d="M2 17C2 13 4 11 6 12C7 13 6 15 4.5 18Z" fill="#e3cfd0"/>
<path d="M15.5 18C18 17 22 19 24.5 22V25H17Z" fill="#dcc0b6"/>
<path d="M8 13L11 13.5L10 16Z" fill="#d9b3a6"/>
</svg></div>
<svg class="a" style="left:20px;top:62px" width="30" height="32" viewBox="0 0 30 32"><rect x="1" y="4" width="24" height="25" rx="1.5" fill="#eac282"/>
<rect x="5" y="3" width="16" height="5.5" fill="#fff"/>
<rect x="6" y="4" width="14" height="3.4" fill="#777"/><path d="M10.3 5V3C10.3 0.3 15.7 0.3 15.7 3V5Z" fill="#777"/><circle cx="13" cy="3" r="1" fill="#fff"/>
<path d="M14.5 11.5H24.5L29.5 16.5V31.5H14.5Z" fill="#fff"/>
<path d="M15.5 12.5H24L28.5 17V30.5H15.5Z" fill="#fff" stroke="#777" stroke-width="1"/>
<path d="M24 12.5V17H28.5" fill="none" stroke="#777" stroke-width="1"/></svg>
<svg class="a" style="left:57px;top:60px" width="16" height="17" viewBox="0 0 16 17"><path d="M3.8 1.5L10.3 11M12.2 1.5L5.7 11" stroke="#5a5a5a" stroke-width="1.9" fill="none"/>
<circle cx="4" cy="13.2" r="2.3" fill="none" stroke="#3b78b8" stroke-width="1.2"/>
<circle cx="12" cy="13.2" r="2.3" fill="none" stroke="#3b78b8" stroke-width="1.2"/></svg>
<svg class="a" style="left:56px;top:84px" width="17" height="16" viewBox="0 0 17 16"><path d="M1.5 1.5H6.5L9.5 4.5V11.5H1.5Z" fill="#fff" stroke="#777" stroke-width="1"/>
<path d="M3 4.5H6M3 6.5H6M3 8.5H6" stroke="#3b78b8" stroke-width="1"/>
<path d="M7.5 4.5H12.5L15.5 7.5V15H7.5Z" fill="#fff" stroke="#777" stroke-width="1"/>
<path d="M9.5 8.5H13.5M9.5 10.5H13.5M9.5 12.5H13.5" stroke="#3b78b8" stroke-width="1"/></svg>
<svg class="a" style="left:56px;top:107px" width="18" height="16" viewBox="0 0 18 16"><g transform="rotate(42 9 8)"><rect x="8" y="-3.5" width="2.6" height="4" fill="#6e6e6e"/><rect x="6.3" y="0" width="6" height="4.6" fill="#6e6e6e"/>
<path d="M5.8 5.6H12.8L15.5 12H2.5Z" fill="#eac282"/></g></svg>
<svg class="a" style="left:89.5px;top:135.5px" width="8" height="8" viewBox="0 0 8 8"><path d="M0.5 5.5V0.5H5.5" fill="none" stroke="#777" stroke-width="1"/><path d="M7 3.2V7H3.2Z" fill="#777"/><path d="M3 3L5.5 5.5" stroke="#777" stroke-width="1"/></svg>
<svg class="a" style="left:296.5px;top:135.5px" width="8" height="8" viewBox="0 0 8 8"><path d="M0.5 5.5V0.5H5.5" fill="none" stroke="#777" stroke-width="1"/><path d="M7 3.2V7H3.2Z" fill="#777"/><path d="M3 3L5.5 5.5" stroke="#777" stroke-width="1"/></svg>
<svg class="a" style="left:636px;top:135.5px" width="8" height="8" viewBox="0 0 8 8"><path d="M0.5 5.5V0.5H5.5" fill="none" stroke="#777" stroke-width="1"/><path d="M7 3.2V7H3.2Z" fill="#777"/><path d="M3 3L5.5 5.5" stroke="#777" stroke-width="1"/></svg>
<svg class="a" style="left:776px;top:135.5px" width="8" height="8" viewBox="0 0 8 8"><path d="M0.5 5.5V0.5H5.5" fill="none" stroke="#777" stroke-width="1"/><path d="M7 3.2V7H3.2Z" fill="#777"/><path d="M3 3L5.5 5.5" stroke="#777" stroke-width="1"/></svg>
<svg class="a" style="left:274.2px;top:70px" width="5" height="3" viewBox="0 0 5 3"><path d="M0 3H5L2.5 0Z" fill="#3b78b8"/></svg>
<svg class="a" style="left:296px;top:70px" width="5" height="3" viewBox="0 0 5 3"><path d="M0 0H5L2.5 3Z" fill="#3b78b8"/></svg>
<svg class="a" style="left:197px;top:101px" width="14" height="13" viewBox="0 0 14 13"><path d="M0 0.5H14M0 6.5H14" fill="none" stroke="#666" stroke-width="1" stroke-dasharray="1 1"/>
<path d="M0.5 0V12M6.5 0V12M12.5 0V12" fill="none" stroke="#666" stroke-width="1" stroke-dasharray="1 1"/>
<path d="M0 12.5H13" stroke="#666" stroke-width="1"/></svg>
<svg class="a" style="left:239px;top:99px" width="17" height="13" viewBox="0 0 17 13"><path d="M7.5 2.2L13 7.8L7.5 12.6L2 8Z" fill="#fff" stroke="#666" stroke-width="1"/>
<path d="M6.3 4.5V1.6C6.3 0.6 8.7 0.6 8.7 1.6V7" fill="none" stroke="#666" stroke-width="1"/>
<path d="M12.5 4.8C15.5 5.5 16.8 8.5 15.2 12C14.5 10 13.8 9 12.8 8.2L13.6 7.4Z" fill="#3b78b8"/></svg>
<svg class="a" style="left:388px;top:66px" width="22" height="20" viewBox="0 0 22 20"><text x="0" y="0" transform="translate(7 14.5) rotate(-48)" font-family="Liberation Sans, sans-serif" font-size="10.5" fill="#444">ab</text><path d="M9.5 17L18 8.8" stroke="#555" stroke-width="1.1"/><path d="M18.8 8L18 12L15 9Z" fill="#555"/></svg>
<svg class="a" style="left:391px;top:103px" width="16" height="10" viewBox="0 0 16 10"><path d="M2 0.5H5.5M7.5 0.5H16" stroke="#666" stroke-width="1"/><path d="M7.5 3.5H16" stroke="#666" stroke-width="1"/><path d="M7.5 6.5H13" stroke="#666" stroke-width="1"/><path d="M2 9.5H5.5M7.5 9.5H16" stroke="#666" stroke-width="1"/><path d="M7.3 4.2H3.3V2L0 5L3.3 8V5.8H7.3Z" fill="#3b78b8"/></svg>
<svg class="a" style="left:413px;top:103px" width="16" height="10" viewBox="0 0 16 10"><path d="M2 0.5H5.5M7.5 0.5H16" stroke="#666" stroke-width="1"/><path d="M7.5 3.5H16" stroke="#666" stroke-width="1"/><path d="M7.5 6.5H13" stroke="#666" stroke-width="1"/><path d="M2 9.5H5.5M7.5 9.5H16" stroke="#666" stroke-width="1"/><path d="M0 4.2H4V2L7.3 5L4 8V5.8H0Z" fill="#3b78b8"/></svg>
<svg class="a" style="left:443px;top:69px" width="18" height="15" viewBox="0 0 18 15"><rect x="1.5" y="0.5" width="9" height="4" fill="#fff" stroke="#777" stroke-width="1"/>
<path d="M3 2.5H15" stroke="#3b78b8" stroke-width="1"/>
<rect x="1.5" y="6.5" width="9" height="8" fill="#fff" stroke="#777" stroke-width="1"/>
<path d="M3 9.5H9M3 11.5H9" stroke="#3b78b8" stroke-width="1"/>
<path d="M16.7 4.6C17.1 7.6 15.5 8.8 12.2 8.6" fill="none" stroke="#3b78b8" stroke-width="1.2"/>
<path d="M14.7 6.2L11.9 8.6L14.7 11" fill="none" stroke="#3b78b8" stroke-width="1.2"/></svg>
<svg class="a" style="left:444px;top:100px" width="15" height="15" viewBox="0 0 15 15"><rect x="0.5" y="0.5" width="14" height="14" fill="#fff" stroke="#777" stroke-width="1"/>
<path d="M0.5 3.5H14.5M0.5 11.5H14.5M7.5 0.5V3.5M7.5 11.5V14.5" stroke="#777" stroke-width="1"/>
<path d="M3.5 7.5H11.5" stroke="#3b78b8" stroke-width="1"/><path d="M2 7.5L4.5 5.5V9.5ZM13 7.5L10.5 5.5V9.5Z" fill="#3b78b8"/></svg>
<svg class="a" style="left:655px;top:100px" width="17" height="17" viewBox="0 0 17 17"><rect x="0" y="0" width="16" height="9" fill="#3b78b8"/>
<path d="M3 1.2H13V3H14.8V6H13V7.8H3V6H1.2V3H3Z" fill="#fff"/>
<circle cx="7.9" cy="4.4" r="2.2" fill="#3b78b8"/><path d="M8.2 4.6H10.5V6.5H8.2Z" fill="#fff"/>
<rect x="8" y="5" width="9" height="5" fill="#fff"/><rect x="3.5" y="9" width="8" height="2" fill="#fff"/>
<g fill="#e9bb72"><rect x="9" y="6" width="7" height="2.6" rx="1.3"/><rect x="9" y="9" width="1" height="1"/><rect x="15" y="9" width="1" height="1"/>
<rect x="11" y="10" width="4" height="1"/><rect x="15" y="11" width="1" height="1"/><rect x="12" y="12" width="3" height="1"/>
<rect x="4" y="11" width="7" height="2.6" rx="1.3"/><rect x="4" y="14" width="1" height="1"/><rect x="10" y="14" width="1" height="1"/><rect x="5" y="15" width="5" height="1"/></g></svg>
<svg class="a" style="left:741px;top:101px" width="9" height="7" viewBox="0 0 9 7"><path d="M1 3.5H8.5" stroke="#3b78b8" stroke-width="1.2"/><path d="M4 0.8L1 3.5L4 6.2" fill="none" stroke="#3b78b8" stroke-width="1.2"/></svg>
<span class="t" id="t114" style="left:751.52px;top:100.00px;font-size:8.6px;color:#444444;transform:scaleX(0.9252);">0</span>
<span class="t" id="t115" style="left:743.00px;top:107.00px;font-size:8.6px;color:#444444;transform:scaleX(1.0814);">,00</span>
<span class="t" id="t116" style="left:765.00px;top:100.00px;font-size:8.6px;color:#444444;transform:scaleX(1.0814);">,00</span>
<svg class="a" style="left:763px;top:108px" width="9" height="7" viewBox="0 0 9 7"><path d="M0.5 3.5H8" stroke="#3b78b8" stroke-width="1.2"/><path d="M5 0.8L8 3.5L5 6.2" fill="none" stroke="#3b78b8" stroke-width="1.2"/></svg>
<span class="t" id="t117" style="left:770.51px;top:107.00px;font-size:8.6px;color:#444444;transform:scaleX(1.0339);">,0</span>
<svg class="a" style="left:815px;top:62px" width="32" height="32" viewBox="0 0 32 32"><rect x="1.5" y="1.5" width="27" height="24" fill="#fff" stroke="#8a8a8a" stroke-width="1"/>
<path d="M8.5 1.5V25.5M21.5 1.5V25.5M1.5 7.5H28.5M1.5 13.5H28.5M1.5 19.5H28.5" stroke="#8a8a8a" stroke-width="1"/>
<rect x="9" y="2" width="6" height="5" fill="#d9623b"/><rect x="9" y="8" width="11" height="5" fill="#3b78b8"/>
<rect x="9" y="14" width="9" height="5" fill="#d9623b"/><rect x="9" y="20" width="4" height="5" fill="#3b78b8"/>
<rect x="15.5" y="18.5" width="15" height="12" fill="#fff" stroke="#777" stroke-width="1"/>
<path d="M19.5 23H26.5M19.5 26H26.5M25.2 20.5L21 28.5" stroke="#444" stroke-width="1.1"/></svg>
<svg class="a" style="left:898px;top:64px" width="32" height="30" viewBox="0 0 32 30"><rect x="8" y="7" width="17" height="14" fill="#c5d9ee"/>
<path d="M7.5 1.5V21.5M13.5 1.5V21.5M19.5 1.5V21.5M1.5 6.5H25.5M1.5 11.5H25.5M1.5 16.5H25.5" stroke="#ababab" stroke-width="1"/>
<rect x="1.5" y="1.5" width="24" height="20" fill="none" stroke="#7a7a7a" stroke-width="1"/><g transform="translate(7.6 6.6)"><g fill="#fff" stroke="#fff" stroke-width="2.2" stroke-linejoin="round"><path d="M22.1 0V7.2L17.6 10.5L15.2 7.7Z"/><path d="M14.6 8.3L17 11.1L14 14.1L11.5 11.8Z"/><path d="M0 22.1C4 19 5.5 15 7.5 13.5C10 11.8 13.3 13.2 13.4 16.2C13.5 19.5 10.5 22.1 7 22.1Z"/></g>
<g fill="#7f7f7f"><path d="M22.1 0V7.2L17.6 10.5L15.2 7.7Z"/><path d="M14.6 8.3L17 11.1L14 14.1L11.5 11.8Z"/></g>
<path d="M0 22.1C4 19 5.5 15 7.5 13.5C10 11.8 13.3 13.2 13.4 16.2C13.5 19.5 10.5 22.1 7 22.1Z" fill="#3b78b8"/>
<path d="M7.6 15.6C8.5 14 11 13.8 12 15.5C12.4 16.8 12 18 11.3 18.8L10 16.6L8.9 16.9Z" fill="#fff"/></g></svg>
<svg class="a" style="left:969px;top:62px" width="32" height="30" viewBox="0 0 32 30"><rect x="7" y="7" width="14" height="10" fill="#c5d9ee"/>
<path d="M6.5 1.5V22.5M20.5 1.5V22.5M1.5 6.5H26.5M1.5 16.5H26.5" stroke="#ababab" stroke-width="1"/>
<rect x="1.5" y="1.5" width="25" height="21" fill="none" stroke="#7a7a7a" stroke-width="1"/><g transform="translate(7.6 6.6)"><g fill="#fff" stroke="#fff" stroke-width="2.2" stroke-linejoin="round"><path d="M22.1 0V7.2L17.6 10.5L15.2 7.7Z"/><path d="M14.6 8.3L17 11.1L14 14.1L11.5 11.8Z"/><path d="M0 22.1C4 19 5.5 15 7.5 13.5C10 11.8 13.3 13.2 13.4 16.2C13.5 19.5 10.5 22.1 7 22.1Z"/></g>
<g fill="#7f7f7f"><path d="M22.1 0V7.2L17.6 10.5L15.2 7.7Z"/><path d="M14.6 8.3L17 11.1L14 14.1L11.5 11.8Z"/></g>
<path d="M0 22.1C4 19 5.5 15 7.5 13.5C10 11.8 13.3 13.2 13.4 16.2C13.5 19.5 10.5 22.1 7 22.1Z" fill="#3b78b8"/>
<path d="M7.6 15.6C8.5 14 11 13.8 12 15.5C12.4 16.8 12 18 11.3 18.8L10 16.6L8.9 16.9Z" fill="#fff"/></g></svg>
<svg class="a" style="left:1022px;top:61px" width="17" height="17" viewBox="0 0 17 17"><path d="M0.5 0.5H8.5V3.5H0.5ZM4.5 0.5V3.5" fill="#fff" stroke="#777" stroke-width="1"/>
<path d="M7.5 5.5H15.5V9.5H7.5ZM11.5 5.5V9.5" fill="#c5d9ee" stroke="#777" stroke-width="1"/>
<path d="M0.5 10.5H8.5V16.5H0.5ZM4.5 10.5V16.5M0.5 13.5H8.5" fill="#fff" stroke="#777" stroke-width="1"/>
<path d="M6.5 6.6H3.5V4.5L0 7.5L3.5 10.5V8.4H6.5Z" fill="#3b78b8"/></svg>
<svg class="a" style="left:1022px;top:84px" width="17" height="17" viewBox="0 0 17 17"><path d="M0.5 0.5H8.5V3.5H0.5ZM4.5 0.5V3.5" fill="#fff" stroke="#777" stroke-width="1"/>
<path d="M0.5 10.5H8.5V15.5H0.5ZM4.5 10.5V15.5" fill="#fff" stroke="#777" stroke-width="1"/>
<path d="M3.5 5.5H8.5V9.5H3.5Z" fill="#c5d9ee" stroke="#777" stroke-width="1"/>
<path d="M9 3.5L15.5 11M15.5 3.5L9 11" stroke="#d9623b" stroke-width="1.5"/></svg>
<svg class="a" style="left:1022px;top:107px" width="16" height="17" viewBox="0 0 16 17"><path d="M0.5 0V4M12.5 0V4M2 2H11" stroke="#3b78b8" stroke-width="1"/><path d="M1.5 2L4 0.3V3.7ZM11.5 2L9 0.3V3.7Z" fill="#3b78b8"/>
<rect x="0.5" y="5.5" width="13" height="10" fill="#fff" stroke="#777" stroke-width="1"/>
<path d="M3.5 5.5V15.5M7.5 5.5V15.5M10.5 5.5V15.5M0.5 8.5H13.5M0.5 12.5H13.5" stroke="#c0c0c0" stroke-width="1"/>
<rect x="3" y="8" width="5" height="4" fill="#3b78b8"/></svg>
<svg class="a" style="left:1116px;top:61px" width="16" height="15" viewBox="0 0 16 15"><path d="M14.5 3V1H1.5L8.5 7.5L1.5 14H14.5V12" fill="none" stroke="#444" stroke-width="1.9" stroke-linejoin="miter"/></svg>
<svg class="a" style="left:1117px;top:84px" width="15" height="16" viewBox="0 0 15 16"><rect x="0.5" y="0.5" width="13.5" height="15" fill="#fff" stroke="#777" stroke-width="1"/><rect x="0.5" y="0.5" width="13.5" height="3" fill="#777"/>
<path d="M7.2 5.5V12" stroke="#3b78b8" stroke-width="1.8"/><path d="M3.3 9L7.2 13L11.1 9" fill="none" stroke="#3b78b8" stroke-width="1.8"/></svg>
<svg class="a" style="left:1116px;top:107px" width="17" height="15" viewBox="0 0 17 15"><g transform="rotate(-42 8 7)"><rect x="1.5" y="3.8" width="13.5" height="6.4" rx="1" fill="#e28a9b"/><rect x="4.2" y="3.5" width="1" height="7" fill="#fff"/></g>
<path d="M6 13.5H15" stroke="#666" stroke-width="1"/></svg>
<span class="t" id="t118" style="left:1162.59px;top:62.00px;font-size:16.5px;color:#3f7fbf;font-weight:bold;transform:scaleX(0.8977);">A</span>
<span class="t" id="t119" style="left:1163.00px;top:76.00px;font-size:16.5px;color:#8e4fb0;font-weight:bold;transform:scaleX(1.0047);">Z</span>
<svg class="a" style="left:1174px;top:71px" width="18" height="15" viewBox="0 0 18 15"><path d="M0 0H17.2V1.2L10 8V14.8H7V8L0 1.2Z" fill="#777"/><path d="M2.2 1.4L8.5 7.6V14" fill="none" stroke="#fff" stroke-width="1"/></svg>
<svg class="a" style="left:1226px;top:65px" width="26" height="23" viewBox="0 0 26 23"><g fill="#717171"><path d="M6 0H10V3H12V8H11V23H0V12.5H2V8H4V3H6Z"/><path d="M16 0H20V3H22V8H24V12.5H26V23H15V8H14V3H16Z"/><rect x="11" y="8" width="4" height="4.5"/></g>
<path d="M7.5 0.8V2.6M5.5 3.8V7.5M3.5 8.8V12M1.5 13.5V22M18.5 0.8V2.6M20.5 3.8V7.5M22.5 8.8V12M24.5 13.5V22" stroke="#fff" stroke-width="1"/><path d="M12 10.5H14" stroke="#fff" stroke-width="1"/></svg>
<svg class="a" style="left:1289px;top:135px" width="11" height="8" viewBox="0 0 11 8"><path d="M1.5 6.8L5.7 2.5L9.9 6.8" fill="none" stroke="#777" stroke-width="1.9"/></svg>
<svg class="a" style="left:1289px;top:168px" width="13" height="10" viewBox="0 0 13 10"><path d="M2 2.2L6.5 6.8L11 2.2" fill="none" stroke="#777" stroke-width="3"/></svg>
<div class="a" style="left:99.5px;top:646px;width:134.5px;height:27px;border:2px solid #f01018;box-shadow:2px 3px 3px rgba(0,0,0,0.35);"></div>
</body></html>
